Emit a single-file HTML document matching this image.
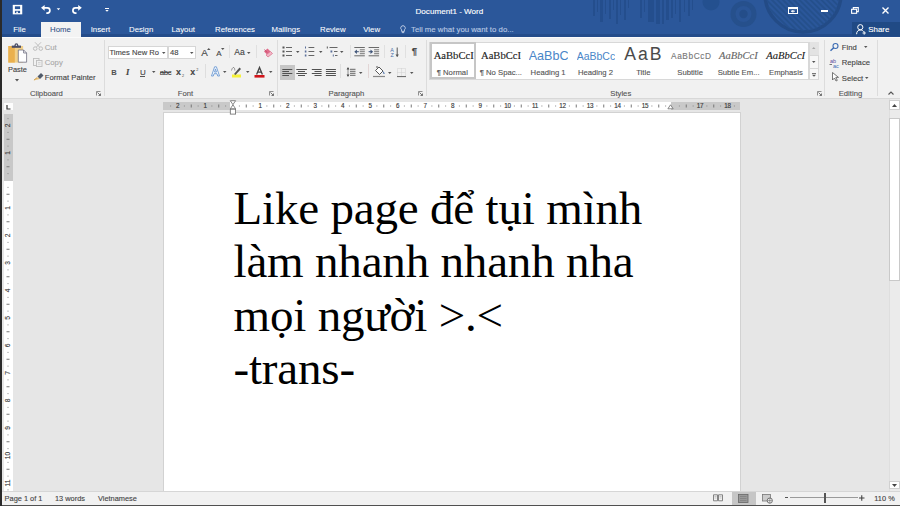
<!DOCTYPE html><html><head><meta charset="utf-8"><style>
*{margin:0;padding:0;box-sizing:border-box}
html,body{width:900px;height:506px;overflow:hidden;background:#e6e6e6;font-family:"Liberation Sans",sans-serif}
.a{position:absolute}
.t{position:absolute;white-space:nowrap;line-height:1;-webkit-text-stroke:0.12px currentColor}
.doc{-webkit-text-stroke:0}
svg{position:absolute;overflow:visible}
</style></head><body>
<div class="a" style="left:0px;top:0px;width:900px;height:37px;background:#2b579a;"></div>
<svg style="left:0px;top:0px;" width="900" height="37" viewBox="0 0 900 37"><rect x="593" y="0" width="2" height="16" fill="#234c89" opacity="0.8"/><rect x="597" y="0" width="1" height="12" fill="#234c89" opacity="0.8"/><rect x="600" y="0" width="3" height="22" fill="#234c89" opacity="0.8"/><rect x="605" y="0" width="1" height="14" fill="#234c89" opacity="0.8"/><rect x="609" y="0" width="2" height="19" fill="#234c89" opacity="0.8"/><rect x="613" y="0" width="1" height="10" fill="#234c89" opacity="0.8"/><rect x="616" y="0" width="2" height="24" fill="#234c89" opacity="0.8"/><rect x="620" y="0" width="1" height="15" fill="#234c89" opacity="0.8"/><rect x="624" y="0" width="2" height="20" fill="#234c89" opacity="0.8"/><rect x="628" y="0" width="1" height="8" fill="#234c89" opacity="0.8"/><rect x="640" y="0" width="2" height="18" fill="#234c89" opacity="0.8"/><rect x="644" y="0" width="1" height="12" fill="#234c89" opacity="0.8"/><rect x="648" y="0" width="6" height="22" fill="#234c89" opacity="0.8"/><rect x="656" y="0" width="4" height="24" fill="#234c89" opacity="0.8"/><rect x="662" y="0" width="2" height="24" fill="#234c89" opacity="0.8"/><rect x="666" y="0" width="3" height="20" fill="#234c89" opacity="0.8"/><rect x="671" y="0" width="2" height="18" fill="#234c89" opacity="0.8"/><rect x="675" y="0" width="1" height="14" fill="#234c89" opacity="0.8"/><rect x="679" y="0" width="2" height="22" fill="#234c89" opacity="0.8"/><rect x="684" y="0" width="1" height="12" fill="#234c89" opacity="0.8"/><rect x="688" y="0" width="2" height="16" fill="#234c89" opacity="0.8"/><rect x="692" y="0" width="1" height="10" fill="#234c89" opacity="0.8"/><circle cx="711" cy="2" r="8.5" fill="#24508f"/><circle cx="743.5" cy="14" r="13" fill="#26508c"/><circle cx="743.5" cy="14" r="8" fill="#2a5596"/><circle cx="743.5" cy="14" r="4.2" fill="#244d89"/><defs><clipPath id="bc"><circle cx="803" cy="-6" r="37"/></clipPath></defs><circle cx="803" cy="-6" r="38" fill="none" stroke="#234b86" stroke-width="3.5"/><g clip-path="url(#bc)"><line x1="694.0" y1="-45" x2="784.0" y2="45" stroke="#25508c" stroke-width="1.8"/><line x1="699.5" y1="-45" x2="789.5" y2="45" stroke="#25508c" stroke-width="1.8"/><line x1="705.0" y1="-45" x2="795.0" y2="45" stroke="#25508c" stroke-width="1.8"/><line x1="710.5" y1="-45" x2="800.5" y2="45" stroke="#25508c" stroke-width="1.8"/><line x1="716.0" y1="-45" x2="806.0" y2="45" stroke="#25508c" stroke-width="1.8"/><line x1="721.5" y1="-45" x2="811.5" y2="45" stroke="#25508c" stroke-width="1.8"/><line x1="727.0" y1="-45" x2="817.0" y2="45" stroke="#25508c" stroke-width="1.8"/><line x1="732.5" y1="-45" x2="822.5" y2="45" stroke="#25508c" stroke-width="1.8"/><line x1="738.0" y1="-45" x2="828.0" y2="45" stroke="#25508c" stroke-width="1.8"/><line x1="743.5" y1="-45" x2="833.5" y2="45" stroke="#25508c" stroke-width="1.8"/><line x1="749.0" y1="-45" x2="839.0" y2="45" stroke="#25508c" stroke-width="1.8"/><line x1="754.5" y1="-45" x2="844.5" y2="45" stroke="#25508c" stroke-width="1.8"/><line x1="760.0" y1="-45" x2="850.0" y2="45" stroke="#25508c" stroke-width="1.8"/><line x1="765.5" y1="-45" x2="855.5" y2="45" stroke="#25508c" stroke-width="1.8"/><line x1="771.0" y1="-45" x2="861.0" y2="45" stroke="#25508c" stroke-width="1.8"/><line x1="776.5" y1="-45" x2="866.5" y2="45" stroke="#25508c" stroke-width="1.8"/><line x1="782.0" y1="-45" x2="872.0" y2="45" stroke="#25508c" stroke-width="1.8"/><line x1="787.5" y1="-45" x2="877.5" y2="45" stroke="#25508c" stroke-width="1.8"/><line x1="793.0" y1="-45" x2="883.0" y2="45" stroke="#25508c" stroke-width="1.8"/><line x1="798.5" y1="-45" x2="888.5" y2="45" stroke="#25508c" stroke-width="1.8"/><line x1="804.0" y1="-45" x2="894.0" y2="45" stroke="#25508c" stroke-width="1.8"/><line x1="809.5" y1="-45" x2="899.5" y2="45" stroke="#25508c" stroke-width="1.8"/><line x1="815.0" y1="-45" x2="905.0" y2="45" stroke="#25508c" stroke-width="1.8"/><line x1="820.5" y1="-45" x2="910.5" y2="45" stroke="#25508c" stroke-width="1.8"/><line x1="826.0" y1="-45" x2="916.0" y2="45" stroke="#25508c" stroke-width="1.8"/><line x1="831.5" y1="-45" x2="921.5" y2="45" stroke="#25508c" stroke-width="1.8"/></g></svg>
<div class="a" style="left:0px;top:33.8px;width:900px;height:3.2px;background:#244c8a;"></div>
<svg style="left:0px;top:0px;" width="1" height="1" viewBox="0 0 1 1"><rect x="12.75" y="4.85" width="9.5" height="9.5" fill="#fff"/><rect x="14.9" y="6.3" width="5.2" height="2.8" fill="#2b579a"/><rect x="14.9" y="10.8" width="5.2" height="2.3" fill="#2b579a"/><rect x="16.3" y="11.6" width="1.6" height="1.5" fill="#fff"/></svg>
<svg style="left:0px;top:0px;" width="1" height="1" viewBox="0 0 1 1"><path d="M41 7.8L44.6 4.9v5.8z" fill="#fff"/><path d="M44 7.9h3.3a2.6 2.6 0 0 1 0 5.2h-1" fill="none" stroke="#fff" stroke-width="1.7"/></svg>
<svg style="left:0px;top:0px;" width="1" height="1" viewBox="0 0 1 1"><path d="M56.7 8.3h3.5L58.45 10.3z" fill="#fff"/></svg>
<svg style="left:0px;top:0px;" width="1" height="1" viewBox="0 0 1 1"><path d="M81.8 7.8L78.2 4.9v5.8z" fill="#fff"/><path d="M78.8 7.9h-3.3a2.6 2.6 0 0 0 0 5.2h1" fill="none" stroke="#fff" stroke-width="1.7"/></svg>
<svg style="left:0px;top:0px;" width="1" height="1" viewBox="0 0 1 1"><rect x="105" y="8" width="4" height="1" fill="#fff"/><path d="M105.3 9.9h3.4L107 11.7z" fill="#fff"/></svg>
<svg style="left:788px;top:7px;" width="10" height="7" viewBox="0 0 10 7"><rect x="0.5" y="0.5" width="9" height="6" fill="none" stroke="#fff" stroke-width="1"/><rect x="0.5" y="0.5" width="9" height="1.6" fill="#fff"/><path d="M3 4.2h4M5 3v2.5" stroke="#fff" stroke-width="0.9"/><path d="M3.2 4.3L4.6 3v2.6z" fill="#fff"/></svg>
<div class="a" style="left:820.5px;top:10.3px;width:7px;height:1.3px;background:#fff;"></div>
<svg style="left:851px;top:7px;" width="8" height="7" viewBox="0 0 8 7"><rect x="0.6" y="2.3" width="5" height="4" fill="none" stroke="#fff" stroke-width="1.1"/><path d="M2.3 2.3V0.6h5v4H5.6" fill="none" stroke="#fff" stroke-width="1.1"/></svg>
<svg style="left:881.5px;top:7px;" width="7" height="7" viewBox="0 0 7 7"><path d="M0.5 0.5l6 6M6.5 0.5l-6 6" stroke="#fff" stroke-width="1.4"/></svg>
<div class="a" style="left:851.5px;top:21.5px;width:48.5px;height:14px;background:#204a85;"></div>
<svg style="left:856px;top:23.5px;" width="10" height="11" viewBox="0 0 10 11"><circle cx="4.3" cy="3.2" r="2.6" fill="none" stroke="#fff" stroke-width="1"/><path d="M0.6 10.2c0-2.8 1.6-4.2 3.7-4.2s2.8 0.8 3.2 1.6" fill="none" stroke="#fff" stroke-width="1"/><path d="M6.5 9h3.4M8.2 7.3v3.4" stroke="#fff" stroke-width="0.9"/></svg>
<div class="a" style="left:41px;top:21.6px;width:40px;height:15.8px;background:#f3f3f3;"></div>
<svg style="left:400px;top:25px;" width="6" height="9" viewBox="0 0 6 9"><path d="M3 0.7a2.3 2.3 0 0 0-1.4 4.1v1.6h2.8V4.8A2.3 2.3 0 0 0 3 0.7z" fill="none" stroke="#c9d5ea" stroke-width="0.9"/><path d="M1.8 7.6h2.4" stroke="#c9d5ea" stroke-width="0.9"/></svg>
<div class="a" style="left:0px;top:37px;width:900px;height:61px;background:#f1f1f1;"></div>
<div class="a" style="left:0px;top:98px;width:900px;height:1px;background:#d8d8d8;"></div>
<div class="a" style="left:0px;top:37px;width:900px;height:1.3px;background:#fbfbfb;"></div>
<div class="a" style="left:103.5px;top:40px;width:1px;height:56px;background:#dcdcdc;"></div>
<div class="a" style="left:276.5px;top:40px;width:1px;height:56px;background:#dcdcdc;"></div>
<div class="a" style="left:426px;top:40px;width:1px;height:56px;background:#dcdcdc;"></div>
<div class="a" style="left:824.3px;top:40px;width:1px;height:56px;background:#dcdcdc;"></div>
<div class="a" style="left:876.6px;top:40px;width:1px;height:56px;background:#dcdcdc;"></div>
<svg style="left:96px;top:90.5px;" width="5" height="5" viewBox="0 0 5 5"><path d="M0.5 4.5V0.5h4" fill="none" stroke="#777" stroke-width="0.8"/><path d="M1.5 1.5L4.5 4.5M4.5 2.5v2h-2" fill="none" stroke="#666" stroke-width="0.9"/></svg>
<svg style="left:269.2px;top:90.5px;" width="5" height="5" viewBox="0 0 5 5"><path d="M0.5 4.5V0.5h4" fill="none" stroke="#777" stroke-width="0.8"/><path d="M1.5 1.5L4.5 4.5M4.5 2.5v2h-2" fill="none" stroke="#666" stroke-width="0.9"/></svg>
<svg style="left:418px;top:90.5px;" width="5" height="5" viewBox="0 0 5 5"><path d="M0.5 4.5V0.5h4" fill="none" stroke="#777" stroke-width="0.8"/><path d="M1.5 1.5L4.5 4.5M4.5 2.5v2h-2" fill="none" stroke="#666" stroke-width="0.9"/></svg>
<svg style="left:817px;top:90.5px;" width="5" height="5" viewBox="0 0 5 5"><path d="M0.5 4.5V0.5h4" fill="none" stroke="#777" stroke-width="0.8"/><path d="M1.5 1.5L4.5 4.5M4.5 2.5v2h-2" fill="none" stroke="#666" stroke-width="0.9"/></svg>
<svg style="left:888px;top:91px;" width="6" height="4" viewBox="0 0 6 4"><path d="M0.5 3.5L3 1l2.5 2.5" fill="none" stroke="#555" stroke-width="1.1"/></svg>
<svg style="left:0px;top:0px;" width="1" height="1" viewBox="0 0 1 1"><rect x="8.3" y="46" width="14.8" height="16.6" fill="#f1d08a"/><rect x="8.3" y="46" width="6.5" height="16.6" fill="#eab04e"/><rect x="11.8" y="45.6" width="9.2" height="2.2" fill="#4a4d66"/><circle cx="16.4" cy="45.2" r="1.9" fill="#4a4d66"/><circle cx="16.4" cy="45.2" r="0.7" fill="#e8e8e8"/><path d="M18.3 50h5.3l3 3v9.2h-8.3z" fill="#fff" stroke="#6e6e80" stroke-width="0.8"/><path d="M23.6 50v3h3" fill="none" stroke="#6e6e80" stroke-width="0.8"/></svg>
<svg style="left:14.5px;top:79px;" width="4" height="2.5" viewBox="0 0 4 2.5"><path d="M0 0h4L2 2.5z" fill="#555"/></svg>
<svg style="left:33px;top:42px;" width="10" height="9" viewBox="0 0 10 9"><circle cx="2.2" cy="6.6" r="1.8" fill="none" stroke="#b9b9b9" stroke-width="0.9"/><circle cx="7.8" cy="6.6" r="1.8" fill="none" stroke="#b9b9b9" stroke-width="0.9"/><path d="M3.3 5.2L8 0.3M6.7 5.2L2 0.3" stroke="#b9b9b9" stroke-width="0.9"/></svg>
<svg style="left:33px;top:57.5px;" width="10" height="9" viewBox="0 0 10 9"><rect x="0.5" y="0.5" width="5.5" height="7" fill="none" stroke="#bdbdbd" stroke-width="0.9"/><rect x="3.5" y="2.5" width="5.5" height="6" fill="#f0f0f0" stroke="#bdbdbd" stroke-width="0.9"/><path d="M5 4.5h2.5M5 6.2h2.5" stroke="#c8c8c8" stroke-width="0.7"/></svg>
<svg style="left:32.5px;top:72.5px;" width="11" height="8" viewBox="0 0 11 8"><path d="M0.5 7.5L5 4l2 2z" fill="#e9c27a"/><path d="M4.5 3.5l2.5 2.5 3.5-3.5-2.5-2.5z" fill="#505a6a"/><path d="M1 7l3-2.3" stroke="#d0a050" stroke-width="1"/></svg>
<div class="a" style="left:107.5px;top:45.7px;width:60.7px;height:13.7px;background:#fff;border:1px solid #d6d6d6"></div>
<div class="a" style="left:168.2px;top:45.7px;width:27.7px;height:13.7px;background:#fff;border:1px solid #d6d6d6"></div>
<svg style="left:162.3px;top:51.5px;" width="3.5" height="2" viewBox="0 0 3.5 2"><path d="M0 0h3.5L1.75 2z" fill="#555"/></svg>
<svg style="left:190.2px;top:51.5px;" width="3.5" height="2" viewBox="0 0 3.5 2"><path d="M0 0h3.5L1.75 2z" fill="#555"/></svg>
<svg style="left:206.5px;top:47.5px;" width="3.5" height="2" viewBox="0 0 3.5 2"><path d="M0 2h3.5L1.75 0z" fill="#555"/></svg>
<svg style="left:220.5px;top:47.5px;" width="3.5" height="2" viewBox="0 0 3.5 2"><path d="M0 0h3.5L1.75 2z" fill="#555"/></svg>
<svg style="left:247px;top:51.5px;" width="3.5" height="2" viewBox="0 0 3.5 2"><path d="M0 0h3.5L1.75 2z" fill="#555"/></svg>
<div class="a" style="left:228.5px;top:45px;width:1px;height:13px;background:#e0e0e0;"></div>
<div class="a" style="left:255.5px;top:45px;width:1px;height:13px;background:#e0e0e0;"></div>
<svg style="left:262.5px;top:47.5px;" width="10" height="10" viewBox="0 0 10 10"><path d="M1 3.5l3.5-3 3 3-3.5 3z" fill="#e06a8a"/><path d="M3 7l4.5-3.5 2 2L5 9z" fill="#f2b6c6" stroke="#d86b88" stroke-width="0.7"/><path d="M1.5 1.5L4 4.5" stroke="#c04060" stroke-width="0.8"/></svg>
<div class="a" style="left:139.8px;top:75.8px;width:5.5px;height:0.9px;background:#555;"></div>
<svg style="left:152.2px;top:71px;" width="3.5" height="2" viewBox="0 0 3.5 2"><path d="M0 0h3.5L1.75 2z" fill="#555"/></svg>
<div class="a" style="left:159.5px;top:72px;width:11px;height:0.8px;background:#666;"></div>
<div class="a" style="left:205px;top:64px;width:1px;height:14px;background:#dedede;"></div>
<svg style="left:210.5px;top:66px;" width="9" height="10.5" viewBox="0 0 9 10.5"><path d="M0.5 10L3.6 0.8h1.8L8.5 10H6.7L6 7.7H3L2.3 10zM3.5 6.1h2L4.5 2.9z" fill="#fff" fill-rule="evenodd" stroke="#6a98d4" stroke-width="0.9"/></svg>
<svg style="left:223px;top:71px;" width="3.5" height="2" viewBox="0 0 3.5 2"><path d="M0 0h3.5L1.75 2z" fill="#555"/></svg>
<svg style="left:231px;top:66px;" width="11" height="12" viewBox="0 0 11 12"><rect x="1" y="8.5" width="9" height="3" fill="#f6f23a"/><path d="M3 8L8.5 1.5 10 3 4.5 9z" fill="#555"/><path d="M0.5 4.5c0.5-2 1.2-3 2-3s1.3 1 1.3 3" fill="none" stroke="#555" stroke-width="0.6"/></svg>
<svg style="left:246px;top:71px;" width="3.5" height="2" viewBox="0 0 3.5 2"><path d="M0 0h3.5L1.75 2z" fill="#555"/></svg>
<svg style="left:253.5px;top:66px;" width="11" height="12" viewBox="0 0 11 12"><path d="M2.6 8.6L5.5 1.5 8.4 8.6M3.7 6.2h3.6" fill="none" stroke="#444" stroke-width="1.3"/><rect x="0.5" y="9" width="10" height="2.6" fill="#d0141a"/></svg>
<svg style="left:268.5px;top:71px;" width="3.5" height="2" viewBox="0 0 3.5 2"><path d="M0 0h3.5L1.75 2z" fill="#555"/></svg>
<svg style="left:0px;top:0px;" width="1" height="1" viewBox="0 0 1 1"><rect x="282.5" y="46.5" width="2" height="2" fill="#555"/><rect x="286" y="47" width="6" height="1" fill="#666"/><rect x="308.5" y="47" width="5.8" height="1" fill="#666"/><rect x="282.5" y="50.5" width="2" height="2" fill="#555"/><rect x="286" y="51" width="6" height="1" fill="#666"/><rect x="308.5" y="51" width="5.8" height="1" fill="#666"/><rect x="282.5" y="54.5" width="2" height="2" fill="#555"/><rect x="286" y="55" width="6" height="1" fill="#666"/><rect x="308.5" y="55" width="5.8" height="1" fill="#666"/><rect x="305" y="46.5" width="1" height="2" fill="#5a6f9a"/><rect x="304.8" y="50.5" width="1.6" height="2" fill="#5a6f9a"/><rect x="304.8" y="54.5" width="1.6" height="2" fill="#5a6f9a"/><rect x="326.8" y="46.5" width="1" height="2" fill="#555"/><rect x="329.5" y="47" width="8" height="1" fill="#666"/><rect x="330.5" y="50.5" width="1.8" height="2" fill="#5a6f9a"/><rect x="334" y="51" width="3.5" height="1" fill="#666"/><rect x="332.8" y="54.5" width="1" height="2" fill="#5a6f9a"/><rect x="335" y="55" width="2.5" height="1" fill="#666"/></svg>
<svg style="left:296.2px;top:51px;" width="3.5" height="2" viewBox="0 0 3.5 2"><path d="M0 0h3.5L1.75 2z" fill="#555"/></svg>
<svg style="left:319.3px;top:51px;" width="3.5" height="2" viewBox="0 0 3.5 2"><path d="M0 0h3.5L1.75 2z" fill="#555"/></svg>
<svg style="left:340px;top:51px;" width="3.5" height="2" viewBox="0 0 3.5 2"><path d="M0 0h3.5L1.75 2z" fill="#555"/></svg>
<div class="a" style="left:349.6px;top:45px;width:1px;height:13px;background:#e0e0e0;"></div>
<svg style="left:0px;top:0px;" width="1" height="1" viewBox="0 0 1 1"><rect x="354.3" y="47" width="10.5" height="1" fill="#6a6a6a"/><rect x="359.8" y="49.3" width="5" height="1" fill="#777"/><rect x="359.8" y="51.2" width="5" height="1" fill="#777"/><rect x="359.8" y="53.2" width="5" height="1" fill="#777"/><rect x="354.3" y="55.3" width="10.5" height="1" fill="#6a6a6a"/><path d="M354.3 51.7l2.6-2.3v4.6z" fill="#3d5377"/><rect x="356.3" y="51.2" width="2.5" height="1" fill="#3d5377"/><rect x="368.6" y="47" width="10.5" height="1" fill="#6a6a6a"/><rect x="374.1" y="49.3" width="5" height="1" fill="#777"/><rect x="374.1" y="51.2" width="5" height="1" fill="#777"/><rect x="374.1" y="53.2" width="5" height="1" fill="#777"/><rect x="368.6" y="55.3" width="10.5" height="1" fill="#6a6a6a"/><path d="M373.1 51.7l-2.6-2.3v4.6z" fill="#3d5377"/><rect x="368.6" y="51.2" width="2.5" height="1" fill="#3d5377"/></svg>
<div class="a" style="left:384.2px;top:45px;width:1px;height:13px;background:#e0e0e0;"></div>
<svg style="left:390.4px;top:46.5px;" width="10" height="11" viewBox="0 0 10 11"><text x="0.3" y="4.8" style="font-size:5.4px;fill:#4a6ea8;font-family:Liberation Sans">A</text><text x="0.5" y="10.2" style="font-size:5.4px;fill:#4a6ea8;font-family:Liberation Sans">Z</text><path d="M7.2 0.5v9" stroke="#555" stroke-width="1"/><path d="M5.5 7.5l1.7 2.5 1.7-2.5z" fill="#555"/></svg>
<div class="a" style="left:405.4px;top:45px;width:1px;height:13px;background:#e0e0e0;"></div>
<div class="a" style="left:280px;top:65px;width:14.5px;height:15px;background:#c6c6c6;"></div>
<svg style="left:0px;top:0px;" width="1" height="1" viewBox="0 0 1 1"><rect x="282.3" y="69" width="10.0" height="1" fill="#505050"/><rect x="282.3" y="71" width="6.699999999999989" height="1" fill="#505050"/><rect x="282.3" y="73" width="10.0" height="1" fill="#505050"/><rect x="282.3" y="75" width="6.699999999999989" height="1" fill="#505050"/></svg>
<svg style="left:0px;top:0px;" width="1" height="1" viewBox="0 0 1 1"><rect x="296.3" y="69" width="10.599999999999966" height="1" fill="#505050"/><rect x="298" y="71" width="7" height="1" fill="#505050"/><rect x="296.3" y="73" width="10.599999999999966" height="1" fill="#505050"/><rect x="298" y="75" width="7" height="1" fill="#505050"/></svg>
<svg style="left:0px;top:0px;" width="1" height="1" viewBox="0 0 1 1"><rect x="311.8" y="69" width="9.800000000000011" height="1" fill="#505050"/><rect x="314.5" y="71" width="7.100000000000023" height="1" fill="#505050"/><rect x="311.8" y="73" width="9.800000000000011" height="1" fill="#505050"/><rect x="314.5" y="75" width="7.100000000000023" height="1" fill="#505050"/></svg>
<svg style="left:0px;top:0px;" width="1" height="1" viewBox="0 0 1 1"><rect x="325.9" y="69" width="10.0" height="1" fill="#505050"/><rect x="325.9" y="71" width="10.0" height="1" fill="#505050"/><rect x="325.9" y="73" width="10.0" height="1" fill="#505050"/><rect x="325.9" y="75" width="10.0" height="1" fill="#505050"/></svg>
<div class="a" style="left:340.3px;top:64px;width:1px;height:14px;background:#dedede;"></div>
<svg style="left:0px;top:0px;" width="1" height="1" viewBox="0 0 1 1"><rect x="350" y="68.8" width="5.5" height="1" fill="#666"/><rect x="350" y="70.8" width="5.5" height="1" fill="#666"/><rect x="350" y="72.8" width="5.5" height="1" fill="#666"/><rect x="350" y="74.8" width="5.5" height="1" fill="#666"/><path d="M348 68.2v7.6" stroke="#777" stroke-width="0.8"/><path d="M346.6 69.4l1.4-2.3 1.4 2.3zM346.6 74.6l1.4 2.3 1.4-2.3z" fill="#444"/></svg>
<svg style="left:359px;top:72px;" width="3.5" height="2" viewBox="0 0 3.5 2"><path d="M0 0h3.5L1.75 2z" fill="#555"/></svg>
<div class="a" style="left:368px;top:64px;width:1px;height:14px;background:#e2d6d6;"></div>
<svg style="left:373px;top:66.3px;" width="12" height="11.5" viewBox="0 0 12 11.5"><path d="M2.5 4.5L6 1l4 4-3.5 3.5z" fill="#fff" stroke="#444" stroke-width="0.9"/><path d="M10 5.5c0.8 1 1.2 1.8 1 2.5" stroke="#3c6cb4" stroke-width="1"/><path d="M4 2V0" stroke="#444" stroke-width="0.9"/><path d="M0 10.5h12" stroke="#888" stroke-width="1.2"/></svg>
<svg style="left:388px;top:72px;" width="3.5" height="2" viewBox="0 0 3.5 2"><path d="M0 0h3.5L1.75 2z" fill="#555"/></svg>
<svg style="left:396.7px;top:67.5px;" width="9" height="9" viewBox="0 0 9 9"><rect x="0.5" y="0.5" width="8" height="8" fill="none" stroke="#c9c9c9" stroke-width="0.8" stroke-dasharray="1 1"/><path d="M4.5 0.5v8M0.5 4.5h8" stroke="#c9c9c9" stroke-width="0.8" stroke-dasharray="1 1"/><path d="M0 8.6h9" stroke="#555" stroke-width="0.9"/></svg>
<svg style="left:410px;top:72px;" width="3.5" height="2" viewBox="0 0 3.5 2"><path d="M0 0h3.5L1.75 2z" fill="#555"/></svg>
<div class="a" style="left:429.3px;top:41.7px;width:380px;height:38.3px;background:#fff;border:1px solid #d8d8d8"></div>
<div class="a" style="left:430px;top:42.3px;width:46px;height:37px;background:transparent;border:2px solid #c6c6c6"></div>
<div class="a" style="left:528.7px;top:47px;width:39px;height:16px;overflow:hidden"><div class="t" style="left:0;top:2.59px;font-size:12.6px;color:#4a86c8;-webkit-text-stroke:0">AaBbCc</div></div>
<div class="a" style="left:576.7px;top:47px;width:38px;height:16px;overflow:hidden"><div class="t" style="left:0;top:3.68px;font-size:10.5px;color:#4a86c8;-webkit-text-stroke:0">AaBbCcD</div></div>
<div class="a" style="left:809px;top:41.7px;width:10px;height:38.3px;background:#f7f7f7;border:1px solid #d8d8d8"></div>
<div class="a" style="left:809.5px;top:42.2px;width:9px;height:12.5px;background:#e3e3e3;"></div>
<svg style="left:812.2px;top:47.2px;" width="3.5" height="2" viewBox="0 0 3.5 2"><path d="M0 2h3.5L1.75 0z" fill="#aaa"/></svg>
<div class="a" style="left:809px;top:55px;width:10px;height:1px;background:#d8d8d8;"></div>
<svg style="left:812.2px;top:61px;" width="3.5" height="2" viewBox="0 0 3.5 2"><path d="M0 0h3.5L1.75 2z" fill="#555"/></svg>
<div class="a" style="left:809px;top:68px;width:10px;height:1px;background:#d8d8d8;"></div>
<svg style="left:812px;top:72.5px;" width="4" height="4" viewBox="0 0 4 4"><path d="M0 0.5h4" stroke="#555" stroke-width="0.8"/><path d="M0 1.8h4L2 3.8z" fill="#555"/></svg>
<svg style="left:830px;top:43.2px;" width="9" height="8" viewBox="0 0 9 8"><circle cx="5.5" cy="3" r="2.5" fill="none" stroke="#3c6cb4" stroke-width="1.1"/><path d="M3.7 4.8L0.5 7.8" stroke="#3c6cb4" stroke-width="1.5"/></svg>
<svg style="left:863.8px;top:46px;" width="3.5" height="2" viewBox="0 0 3.5 2"><path d="M0 0h3.5L1.75 2z" fill="#555"/></svg>
<svg style="left:829.3px;top:57.5px;" width="11" height="10" viewBox="0 0 11 10"><text x="1" y="4.5" font-size="5.5" fill="#5b4c9a" font-family="Liberation Sans">ab</text><text x="4" y="9.8" font-size="5.5" fill="#3c6cb4" font-family="Liberation Sans">ac</text><path d="M0.5 6.5h2.5" stroke="#555" stroke-width="0.8"/></svg>
<svg style="left:831.8px;top:71.9px;" width="7" height="9" viewBox="0 0 7 9"><path d="M0.5 0.5v7.5l2-2 1.5 3 1.3-0.6-1.5-3h2.7z" fill="#fff" stroke="#555" stroke-width="0.8"/></svg>
<svg style="left:864.5px;top:77px;" width="3.5" height="2" viewBox="0 0 3.5 2"><path d="M0 0h3.5L1.75 2z" fill="#555"/></svg>
<div class="a" style="left:0px;top:99px;width:900px;height:392px;background:#e6e6e6;"></div>
<div class="a" style="left:164px;top:113px;width:576px;height:378px;background:#fff;box-shadow:0 0 0 1px #d2d2d2"></div>
<div class="t doc" style="left:233.5px;top:182px;font-family:'Liberation Serif',serif;font-size:47px;line-height:53.4px;letter-spacing:-0.18px;color:#000">Like page để tụi mình<br>làm nhanh nhanh nha<br>mọi người &gt;.&lt;<br>-trans-</div>
<div class="a" style="left:162.5px;top:102px;width:577px;height:8px;background:#fff;"></div>
<div class="a" style="left:162.5px;top:102px;width:67.5px;height:8px;background:#c9c9c9;"></div>
<div class="a" style="left:670.5px;top:102px;width:69px;height:8px;background:#c9c9c9;"></div>
<svg style="left:0px;top:0px;" width="1" height="1" viewBox="0 0 1 1"><rect x="170.12" y="105.5" width="1" height="1" fill="#888"/><text x="177.50" y="108.4" font-size="6.3" letter-spacing="-0.3" fill="#3a3a3a" stroke="#3a3a3a" stroke-width="0.15" text-anchor="middle" font-family="Liberation Sans">2</text><rect x="183.88" y="105.5" width="1" height="1" fill="#888"/><rect x="190.75" y="104.5" width="1" height="3" fill="#777"/><rect x="197.62" y="105.5" width="1" height="1" fill="#888"/><text x="205.00" y="108.4" font-size="6.3" letter-spacing="-0.3" fill="#3a3a3a" stroke="#3a3a3a" stroke-width="0.15" text-anchor="middle" font-family="Liberation Sans">1</text><rect x="211.38" y="105.5" width="1" height="1" fill="#888"/><rect x="218.25" y="104.5" width="1" height="3" fill="#777"/><rect x="225.12" y="105.5" width="1" height="1" fill="#888"/><rect x="238.88" y="105.5" width="1" height="1" fill="#888"/><rect x="245.75" y="104.5" width="1" height="3" fill="#777"/><rect x="252.62" y="105.5" width="1" height="1" fill="#888"/><text x="260.00" y="108.4" font-size="6.3" letter-spacing="-0.3" fill="#3a3a3a" stroke="#3a3a3a" stroke-width="0.15" text-anchor="middle" font-family="Liberation Sans">1</text><rect x="266.38" y="105.5" width="1" height="1" fill="#888"/><rect x="273.25" y="104.5" width="1" height="3" fill="#777"/><rect x="280.12" y="105.5" width="1" height="1" fill="#888"/><text x="287.50" y="108.4" font-size="6.3" letter-spacing="-0.3" fill="#3a3a3a" stroke="#3a3a3a" stroke-width="0.15" text-anchor="middle" font-family="Liberation Sans">2</text><rect x="293.88" y="105.5" width="1" height="1" fill="#888"/><rect x="300.75" y="104.5" width="1" height="3" fill="#777"/><rect x="307.62" y="105.5" width="1" height="1" fill="#888"/><text x="315.00" y="108.4" font-size="6.3" letter-spacing="-0.3" fill="#3a3a3a" stroke="#3a3a3a" stroke-width="0.15" text-anchor="middle" font-family="Liberation Sans">3</text><rect x="321.38" y="105.5" width="1" height="1" fill="#888"/><rect x="328.25" y="104.5" width="1" height="3" fill="#777"/><rect x="335.12" y="105.5" width="1" height="1" fill="#888"/><text x="342.50" y="108.4" font-size="6.3" letter-spacing="-0.3" fill="#3a3a3a" stroke="#3a3a3a" stroke-width="0.15" text-anchor="middle" font-family="Liberation Sans">4</text><rect x="348.88" y="105.5" width="1" height="1" fill="#888"/><rect x="355.75" y="104.5" width="1" height="3" fill="#777"/><rect x="362.62" y="105.5" width="1" height="1" fill="#888"/><text x="370.00" y="108.4" font-size="6.3" letter-spacing="-0.3" fill="#3a3a3a" stroke="#3a3a3a" stroke-width="0.15" text-anchor="middle" font-family="Liberation Sans">5</text><rect x="376.38" y="105.5" width="1" height="1" fill="#888"/><rect x="383.25" y="104.5" width="1" height="3" fill="#777"/><rect x="390.12" y="105.5" width="1" height="1" fill="#888"/><text x="397.50" y="108.4" font-size="6.3" letter-spacing="-0.3" fill="#3a3a3a" stroke="#3a3a3a" stroke-width="0.15" text-anchor="middle" font-family="Liberation Sans">6</text><rect x="403.88" y="105.5" width="1" height="1" fill="#888"/><rect x="410.75" y="104.5" width="1" height="3" fill="#777"/><rect x="417.62" y="105.5" width="1" height="1" fill="#888"/><text x="425.00" y="108.4" font-size="6.3" letter-spacing="-0.3" fill="#3a3a3a" stroke="#3a3a3a" stroke-width="0.15" text-anchor="middle" font-family="Liberation Sans">7</text><rect x="431.38" y="105.5" width="1" height="1" fill="#888"/><rect x="438.25" y="104.5" width="1" height="3" fill="#777"/><rect x="445.12" y="105.5" width="1" height="1" fill="#888"/><text x="452.50" y="108.4" font-size="6.3" letter-spacing="-0.3" fill="#3a3a3a" stroke="#3a3a3a" stroke-width="0.15" text-anchor="middle" font-family="Liberation Sans">8</text><rect x="458.88" y="105.5" width="1" height="1" fill="#888"/><rect x="465.75" y="104.5" width="1" height="3" fill="#777"/><rect x="472.62" y="105.5" width="1" height="1" fill="#888"/><text x="480.00" y="108.4" font-size="6.3" letter-spacing="-0.3" fill="#3a3a3a" stroke="#3a3a3a" stroke-width="0.15" text-anchor="middle" font-family="Liberation Sans">9</text><rect x="486.38" y="105.5" width="1" height="1" fill="#888"/><rect x="493.25" y="104.5" width="1" height="3" fill="#777"/><rect x="500.12" y="105.5" width="1" height="1" fill="#888"/><text x="507.50" y="108.4" font-size="6.3" letter-spacing="-0.3" fill="#3a3a3a" stroke="#3a3a3a" stroke-width="0.15" text-anchor="middle" font-family="Liberation Sans">10</text><rect x="513.88" y="105.5" width="1" height="1" fill="#888"/><rect x="520.75" y="104.5" width="1" height="3" fill="#777"/><rect x="527.62" y="105.5" width="1" height="1" fill="#888"/><text x="535.00" y="108.4" font-size="6.3" letter-spacing="-0.3" fill="#3a3a3a" stroke="#3a3a3a" stroke-width="0.15" text-anchor="middle" font-family="Liberation Sans">11</text><rect x="541.38" y="105.5" width="1" height="1" fill="#888"/><rect x="548.25" y="104.5" width="1" height="3" fill="#777"/><rect x="555.12" y="105.5" width="1" height="1" fill="#888"/><text x="562.50" y="108.4" font-size="6.3" letter-spacing="-0.3" fill="#3a3a3a" stroke="#3a3a3a" stroke-width="0.15" text-anchor="middle" font-family="Liberation Sans">12</text><rect x="568.88" y="105.5" width="1" height="1" fill="#888"/><rect x="575.75" y="104.5" width="1" height="3" fill="#777"/><rect x="582.62" y="105.5" width="1" height="1" fill="#888"/><text x="590.00" y="108.4" font-size="6.3" letter-spacing="-0.3" fill="#3a3a3a" stroke="#3a3a3a" stroke-width="0.15" text-anchor="middle" font-family="Liberation Sans">13</text><rect x="596.38" y="105.5" width="1" height="1" fill="#888"/><rect x="603.25" y="104.5" width="1" height="3" fill="#777"/><rect x="610.12" y="105.5" width="1" height="1" fill="#888"/><text x="617.50" y="108.4" font-size="6.3" letter-spacing="-0.3" fill="#3a3a3a" stroke="#3a3a3a" stroke-width="0.15" text-anchor="middle" font-family="Liberation Sans">14</text><rect x="623.88" y="105.5" width="1" height="1" fill="#888"/><rect x="630.75" y="104.5" width="1" height="3" fill="#777"/><rect x="637.62" y="105.5" width="1" height="1" fill="#888"/><text x="645.00" y="108.4" font-size="6.3" letter-spacing="-0.3" fill="#3a3a3a" stroke="#3a3a3a" stroke-width="0.15" text-anchor="middle" font-family="Liberation Sans">15</text><rect x="651.38" y="105.5" width="1" height="1" fill="#888"/><rect x="658.25" y="104.5" width="1" height="3" fill="#777"/><rect x="665.12" y="105.5" width="1" height="1" fill="#888"/><rect x="678.88" y="105.5" width="1" height="1" fill="#888"/><rect x="685.75" y="104.5" width="1" height="3" fill="#777"/><rect x="692.62" y="105.5" width="1" height="1" fill="#888"/><text x="700.00" y="108.4" font-size="6.3" letter-spacing="-0.3" fill="#3a3a3a" stroke="#3a3a3a" stroke-width="0.15" text-anchor="middle" font-family="Liberation Sans">17</text><rect x="706.38" y="105.5" width="1" height="1" fill="#888"/><rect x="713.25" y="104.5" width="1" height="3" fill="#777"/><rect x="720.12" y="105.5" width="1" height="1" fill="#888"/><text x="727.50" y="108.4" font-size="6.3" letter-spacing="-0.3" fill="#3a3a3a" stroke="#3a3a3a" stroke-width="0.15" text-anchor="middle" font-family="Liberation Sans">18</text><rect x="733.88" y="105.5" width="1" height="1" fill="#888"/></svg>
<svg style="left:0px;top:0px;" width="1" height="1" viewBox="0 0 1 1"><path d="M230.3 100.7h5.3L232.95 104.6z" fill="#fff" stroke="#6a6a6a" stroke-width="0.8"/><path d="M230.3 108.8L232.95 104.8l2.65 4z" fill="#fff" stroke="#6a6a6a" stroke-width="0.8"/><rect x="230.3" y="109.2" width="5.3" height="4.9" fill="#fff" stroke="#6a6a6a" stroke-width="0.8"/></svg>
<svg style="left:0px;top:0px;" width="1" height="1" viewBox="0 0 1 1"><path d="M667.9 108.8L670.5 104.8l2.65 4z" fill="#fff" stroke="#6a6a6a" stroke-width="0.8"/></svg>
<div class="a" style="left:3.5px;top:102.5px;width:9.5px;height:7.5px;background:#fdfdfd;"></div>
<svg style="left:5.5px;top:104.5px;" width="5" height="5" viewBox="0 0 5 5"><path d="M1 0v4h3.5" fill="none" stroke="#333" stroke-width="1.2"/></svg>
<div class="a" style="left:3.5px;top:113.5px;width:9px;height:378px;background:#fff;"></div>
<div class="a" style="left:3.5px;top:113.5px;width:9px;height:67px;background:#c8c8c8;"></div>
<svg style="left:0px;top:0px;" width="1" height="1" viewBox="0 0 1 1"><rect x="7.5" y="118.12" width="1" height="1" fill="#888"/><text x="0" y="0" transform="translate(10.3 125.50) rotate(-90)" font-size="6.6" fill="#3a3a3a" stroke="#3a3a3a" stroke-width="0.15" text-anchor="middle" font-family="Liberation Sans">2</text><rect x="7.5" y="131.88" width="1" height="1" fill="#888"/><rect x="6.5" y="138.75" width="3" height="1" fill="#777"/><rect x="7.5" y="145.62" width="1" height="1" fill="#888"/><text x="0" y="0" transform="translate(10.3 153.00) rotate(-90)" font-size="6.6" fill="#3a3a3a" stroke="#3a3a3a" stroke-width="0.15" text-anchor="middle" font-family="Liberation Sans">1</text><rect x="7.5" y="159.38" width="1" height="1" fill="#888"/><rect x="6.5" y="166.25" width="3" height="1" fill="#777"/><rect x="7.5" y="173.12" width="1" height="1" fill="#888"/><rect x="7.5" y="186.88" width="1" height="1" fill="#888"/><rect x="6.5" y="193.75" width="3" height="1" fill="#777"/><rect x="7.5" y="200.62" width="1" height="1" fill="#888"/><text x="0" y="0" transform="translate(10.3 208.00) rotate(-90)" font-size="6.6" fill="#3a3a3a" stroke="#3a3a3a" stroke-width="0.15" text-anchor="middle" font-family="Liberation Sans">1</text><rect x="7.5" y="214.38" width="1" height="1" fill="#888"/><rect x="6.5" y="221.25" width="3" height="1" fill="#777"/><rect x="7.5" y="228.12" width="1" height="1" fill="#888"/><text x="0" y="0" transform="translate(10.3 235.50) rotate(-90)" font-size="6.6" fill="#3a3a3a" stroke="#3a3a3a" stroke-width="0.15" text-anchor="middle" font-family="Liberation Sans">2</text><rect x="7.5" y="241.88" width="1" height="1" fill="#888"/><rect x="6.5" y="248.75" width="3" height="1" fill="#777"/><rect x="7.5" y="255.62" width="1" height="1" fill="#888"/><text x="0" y="0" transform="translate(10.3 263.00) rotate(-90)" font-size="6.6" fill="#3a3a3a" stroke="#3a3a3a" stroke-width="0.15" text-anchor="middle" font-family="Liberation Sans">3</text><rect x="7.5" y="269.38" width="1" height="1" fill="#888"/><rect x="6.5" y="276.25" width="3" height="1" fill="#777"/><rect x="7.5" y="283.12" width="1" height="1" fill="#888"/><text x="0" y="0" transform="translate(10.3 290.50) rotate(-90)" font-size="6.6" fill="#3a3a3a" stroke="#3a3a3a" stroke-width="0.15" text-anchor="middle" font-family="Liberation Sans">4</text><rect x="7.5" y="296.88" width="1" height="1" fill="#888"/><rect x="6.5" y="303.75" width="3" height="1" fill="#777"/><rect x="7.5" y="310.62" width="1" height="1" fill="#888"/><text x="0" y="0" transform="translate(10.3 318.00) rotate(-90)" font-size="6.6" fill="#3a3a3a" stroke="#3a3a3a" stroke-width="0.15" text-anchor="middle" font-family="Liberation Sans">5</text><rect x="7.5" y="324.38" width="1" height="1" fill="#888"/><rect x="6.5" y="331.25" width="3" height="1" fill="#777"/><rect x="7.5" y="338.12" width="1" height="1" fill="#888"/><text x="0" y="0" transform="translate(10.3 345.50) rotate(-90)" font-size="6.6" fill="#3a3a3a" stroke="#3a3a3a" stroke-width="0.15" text-anchor="middle" font-family="Liberation Sans">6</text><rect x="7.5" y="351.88" width="1" height="1" fill="#888"/><rect x="6.5" y="358.75" width="3" height="1" fill="#777"/><rect x="7.5" y="365.62" width="1" height="1" fill="#888"/><text x="0" y="0" transform="translate(10.3 373.00) rotate(-90)" font-size="6.6" fill="#3a3a3a" stroke="#3a3a3a" stroke-width="0.15" text-anchor="middle" font-family="Liberation Sans">7</text><rect x="7.5" y="379.38" width="1" height="1" fill="#888"/><rect x="6.5" y="386.25" width="3" height="1" fill="#777"/><rect x="7.5" y="393.12" width="1" height="1" fill="#888"/><text x="0" y="0" transform="translate(10.3 400.50) rotate(-90)" font-size="6.6" fill="#3a3a3a" stroke="#3a3a3a" stroke-width="0.15" text-anchor="middle" font-family="Liberation Sans">8</text><rect x="7.5" y="406.88" width="1" height="1" fill="#888"/><rect x="6.5" y="413.75" width="3" height="1" fill="#777"/><rect x="7.5" y="420.62" width="1" height="1" fill="#888"/><text x="0" y="0" transform="translate(10.3 428.00) rotate(-90)" font-size="6.6" fill="#3a3a3a" stroke="#3a3a3a" stroke-width="0.15" text-anchor="middle" font-family="Liberation Sans">9</text><rect x="7.5" y="434.38" width="1" height="1" fill="#888"/><rect x="6.5" y="441.25" width="3" height="1" fill="#777"/><rect x="7.5" y="448.12" width="1" height="1" fill="#888"/><text x="0" y="0" transform="translate(10.3 455.50) rotate(-90)" font-size="6.6" fill="#3a3a3a" stroke="#3a3a3a" stroke-width="0.15" text-anchor="middle" font-family="Liberation Sans">10</text><rect x="7.5" y="461.88" width="1" height="1" fill="#888"/><rect x="6.5" y="468.75" width="3" height="1" fill="#777"/><rect x="7.5" y="475.62" width="1" height="1" fill="#888"/><text x="0" y="0" transform="translate(10.3 483.00) rotate(-90)" font-size="6.6" fill="#3a3a3a" stroke="#3a3a3a" stroke-width="0.15" text-anchor="middle" font-family="Liberation Sans">11</text><rect x="7.5" y="489.38" width="1" height="1" fill="#888"/></svg>
<div class="a" style="left:888.5px;top:99px;width:11.5px;height:392px;background:#ebebeb;border-left:1px solid #dedede"></div>
<div class="a" style="left:889px;top:100px;width:11px;height:9.5px;background:#fff;border:1px solid #d0d0d0"></div>
<svg style="left:892px;top:103.5px;" width="5" height="3" viewBox="0 0 5 3"><path d="M0 3h5L2.5 0z" fill="#444"/></svg>
<div class="a" style="left:889px;top:118px;width:11px;height:162.5px;background:#fff;border:1px solid #c9c9c9"></div>
<div class="a" style="left:889px;top:481px;width:11px;height:8px;background:#fff;border:1px solid #d0d0d0"></div>
<svg style="left:892px;top:484px;" width="5" height="3" viewBox="0 0 5 3"><path d="M0 0h5L2.5 3z" fill="#444"/></svg>
<div class="a" style="left:0px;top:491px;width:900px;height:14px;background:#f1f1f1;border-top:1px solid #d6d6d6"></div>
<div class="a" style="left:0px;top:504.5px;width:900px;height:1.5px;background:#505050;"></div>
<svg style="left:713.3px;top:494px;" width="10" height="7" viewBox="0 0 10 7"><path d="M0.5 0.8h4v6h-4zM5.5 0.8h4v6h-4z" fill="none" stroke="#777" stroke-width="0.9"/><path d="M1.5 2.5h2M1.5 4h2M6.5 2.5h2M6.5 4h2" stroke="#aaa" stroke-width="0.6"/></svg>
<div class="a" style="left:731.5px;top:491.5px;width:24px;height:13px;background:#c6c6c6;"></div>
<svg style="left:737.8px;top:493.5px;" width="10.5" height="9" viewBox="0 0 10.5 9"><rect x="0.5" y="0.5" width="9.5" height="8" fill="#999" stroke="#666" stroke-width="0.8"/><path d="M2 2.5h6.5M2 4.5h6.5M2 6.5h6.5" stroke="#777" stroke-width="0.6"/></svg>
<svg style="left:762.3px;top:493.5px;" width="11" height="9" viewBox="0 0 11 9"><rect x="0.5" y="0.5" width="8" height="6.5" fill="#ccc" stroke="#777" stroke-width="0.8"/><circle cx="7.8" cy="6.6" r="2.6" fill="#f1f1f1" stroke="#555" stroke-width="0.8"/><path d="M5.5 6.6h4.6M7.8 4v5.2" stroke="#555" stroke-width="0.5"/></svg>
<div class="a" style="left:784.5px;top:497.3px;width:3.5px;height:1px;background:#555;"></div>
<div class="a" style="left:790.3px;top:497.3px;width:67.7px;height:1px;background:#9a9a9a;"></div>
<div class="a" style="left:823.8px;top:492.5px;width:2.5px;height:10px;background:#555;"></div>
<svg style="left:859.2px;top:494.5px;" width="6" height="6" viewBox="0 0 6 6"><path d="M0 3h5.5M2.75 0.2v5.6" stroke="#444" stroke-width="1.1"/></svg>
<div class="a" style="left:0px;top:0px;width:1.5px;height:506px;background:#2a2a2a;"></div>
<svg style="left:0;top:0" width="900" height="506"><text x="415.5" y="13.9" style="font-family:'Liberation Sans',sans-serif;font-size:8.1px;fill:#fff;stroke:#fff;stroke-width:0.12px;">Document1 - Word</text><text x="868.3" y="32.3" style="font-family:'Liberation Sans',sans-serif;font-size:7.9px;fill:#fff;stroke:#fff;stroke-width:0.12px;">Share</text><text x="13.3" y="32.4" style="font-family:'Liberation Sans',sans-serif;font-size:7.8px;fill:#fff;stroke:#fff;stroke-width:0.05px;">File</text><text x="50" y="32.4" style="font-family:'Liberation Sans',sans-serif;font-size:7.8px;fill:#2c4d84;stroke:#2c4d84;stroke-width:0.05px;">Home</text><text x="90.7" y="32.4" style="font-family:'Liberation Sans',sans-serif;font-size:7.8px;fill:#fff;stroke:#fff;stroke-width:0.05px;">Insert</text><text x="129" y="32.4" style="font-family:'Liberation Sans',sans-serif;font-size:7.8px;fill:#fff;stroke:#fff;stroke-width:0.05px;">Design</text><text x="171.5" y="32.4" style="font-family:'Liberation Sans',sans-serif;font-size:7.8px;fill:#fff;stroke:#fff;stroke-width:0.05px;">Layout</text><text x="215" y="32.4" style="font-family:'Liberation Sans',sans-serif;font-size:7.8px;fill:#fff;stroke:#fff;stroke-width:0.05px;">References</text><text x="271.5" y="32.4" style="font-family:'Liberation Sans',sans-serif;font-size:7.8px;fill:#fff;stroke:#fff;stroke-width:0.05px;">Mailings</text><text x="320" y="32.4" style="font-family:'Liberation Sans',sans-serif;font-size:7.8px;fill:#fff;stroke:#fff;stroke-width:0.05px;">Review</text><text x="363.3" y="32.4" style="font-family:'Liberation Sans',sans-serif;font-size:7.8px;fill:#fff;stroke:#fff;stroke-width:0.05px;">View</text><text x="411" y="32.4" style="font-family:'Liberation Sans',sans-serif;font-size:7.8px;fill:#b9c8e2;stroke:#b9c8e2;stroke-width:0.12px;">Tell me what you want to do...</text><text x="29.9" y="95.5" style="font-family:'Liberation Sans',sans-serif;font-size:7.7px;fill:#555;stroke:#555;stroke-width:0.12px;">Clipboard</text><text x="177.8" y="95.5" style="font-family:'Liberation Sans',sans-serif;font-size:7.7px;fill:#555;stroke:#555;stroke-width:0.12px;">Font</text><text x="328.5" y="95.5" style="font-family:'Liberation Sans',sans-serif;font-size:7.7px;fill:#555;stroke:#555;stroke-width:0.12px;">Paragraph</text><text x="610.3" y="95.5" style="font-family:'Liberation Sans',sans-serif;font-size:7.7px;fill:#555;stroke:#555;stroke-width:0.12px;">Styles</text><text x="838.7" y="95.5" style="font-family:'Liberation Sans',sans-serif;font-size:7.7px;fill:#555;stroke:#555;stroke-width:0.12px;">Editing</text><text x="8" y="72.3" style="font-family:'Liberation Sans',sans-serif;font-size:7.4px;fill:#444;stroke:#444;stroke-width:0.12px;">Paste</text><text x="44.8" y="50" style="font-family:'Liberation Sans',sans-serif;font-size:7.7px;fill:#a9a9a9;stroke:#a9a9a9;stroke-width:0.12px;">Cut</text><text x="44.8" y="65" style="font-family:'Liberation Sans',sans-serif;font-size:7.7px;fill:#a9a9a9;stroke:#a9a9a9;stroke-width:0.12px;">Copy</text><text x="44.8" y="80" style="font-family:'Liberation Sans',sans-serif;font-size:7.7px;fill:#444;stroke:#444;stroke-width:0.12px;">Format Painter</text><text x="109.5" y="55.4" style="font-family:'Liberation Sans',sans-serif;font-size:7.6px;fill:#444;stroke:#444;stroke-width:0.12px;">Times New Ro</text><text x="170" y="55.4" style="font-family:'Liberation Sans',sans-serif;font-size:7.6px;fill:#444;stroke:#444;stroke-width:0.12px;">48</text><text x="201.2" y="55.7" style="font-family:'Liberation Sans',sans-serif;font-size:9.8px;fill:#444;stroke:#444;stroke-width:0.12px;">A</text><text x="216.2" y="55.7" style="font-family:'Liberation Sans',sans-serif;font-size:8px;fill:#444;stroke:#444;stroke-width:0.12px;">A</text><text x="234.2" y="54.7" style="font-family:'Liberation Sans',sans-serif;font-size:8.6px;fill:#444;stroke:#444;stroke-width:0.12px;">Aa</text><text x="111.2" y="74.6" style="font-family:'Liberation Sans',sans-serif;font-size:7.6px;fill:#505050;font-weight:bold">B</text><text x="126" y="75" style="font-family:'Liberation Sans',sans-serif;font-size:8.6px;fill:#444;stroke:#444;stroke-width:0.12px;font-style:italic;font-family:'Liberation Serif',serif;font-weight:bold">I</text><text x="140" y="75" style="font-family:'Liberation Sans',sans-serif;font-size:8px;fill:#444;stroke:#444;stroke-width:0.12px;">U</text><text x="159.8" y="75" style="font-family:'Liberation Sans',sans-serif;font-size:7.8px;fill:#444;stroke:#444;stroke-width:0.12px;letter-spacing:-0.4px">abc</text><text x="176" y="75" style="font-family:'Liberation Sans',sans-serif;font-size:8.8px;fill:#444;stroke:#444;stroke-width:0.12px;font-weight:bold">x</text><text x="182" y="76.5" style="font-family:'Liberation Sans',sans-serif;font-size:3.8px;fill:#444;">2</text><text x="190.3" y="75" style="font-family:'Liberation Sans',sans-serif;font-size:8.8px;fill:#444;stroke:#444;stroke-width:0.12px;font-weight:bold">x</text><text x="196.2" y="70.5" style="font-family:'Liberation Sans',sans-serif;font-size:3.8px;fill:#444;">2</text><text x="411.8" y="54" style="font-family:'Liberation Sans',sans-serif;font-size:9.6px;fill:#444;stroke:#444;stroke-width:0.12px;font-weight:bold">¶</text><text x="433.7" y="59.4" style="font-family:'Liberation Serif',serif;font-size:10.6px;fill:#222;stroke:#222;stroke-width:0.12px;">AaBbCcI</text><text x="436.8" y="75" style="font-family:'Liberation Sans',sans-serif;font-size:7.7px;fill:#555;stroke:#555;stroke-width:0.12px;">¶ Normal</text><text x="481" y="59.4" style="font-family:'Liberation Serif',serif;font-size:10.6px;fill:#222;stroke:#222;stroke-width:0.12px;">AaBbCcI</text><text x="479.8" y="75" style="font-family:'Liberation Sans',sans-serif;font-size:7.7px;fill:#555;stroke:#555;stroke-width:0.12px;">¶ No Spac...</text><text x="530.6" y="75" style="font-family:'Liberation Sans',sans-serif;font-size:7.7px;fill:#555;stroke:#555;stroke-width:0.12px;">Heading 1</text><text x="577.9" y="75" style="font-family:'Liberation Sans',sans-serif;font-size:7.7px;fill:#555;stroke:#555;stroke-width:0.12px;">Heading 2</text><text x="624.3" y="60" style="font-family:'Liberation Sans',sans-serif;font-size:17.6px;fill:#4a4a4a;letter-spacing:2px">AaB</text><text x="636.2" y="75" style="font-family:'Liberation Sans',sans-serif;font-size:7.7px;fill:#555;stroke:#555;stroke-width:0.12px;">Title</text><text x="671" y="59.4" style="font-family:'Liberation Sans',sans-serif;font-size:8.3px;fill:#777;stroke:#777;stroke-width:0.12px;letter-spacing:0.6px">AaBbCcD</text><text x="677.3" y="75" style="font-family:'Liberation Sans',sans-serif;font-size:7.7px;fill:#555;stroke:#555;stroke-width:0.12px;">Subtitle</text><text x="719" y="59" style="font-family:'Liberation Serif',serif;font-size:10.6px;fill:#666;stroke:#666;stroke-width:0.12px;font-style:italic">AaBbCcI</text><text x="717.7" y="75" style="font-family:'Liberation Sans',sans-serif;font-size:7.7px;fill:#555;stroke:#555;stroke-width:0.12px;">Subtle Em...</text><text x="766.3" y="59" style="font-family:'Liberation Serif',serif;font-size:10.6px;fill:#222;stroke:#222;stroke-width:0.12px;font-style:italic">AaBbCcI</text><text x="769" y="75" style="font-family:'Liberation Sans',sans-serif;font-size:7.7px;fill:#555;stroke:#555;stroke-width:0.12px;">Emphasis</text><text x="841.8" y="49.5" style="font-family:'Liberation Sans',sans-serif;font-size:7.7px;fill:#444;stroke:#444;stroke-width:0.12px;">Find</text><text x="841.8" y="65" style="font-family:'Liberation Sans',sans-serif;font-size:7.7px;fill:#444;stroke:#444;stroke-width:0.12px;">Replace</text><text x="841.8" y="80.5" style="font-family:'Liberation Sans',sans-serif;font-size:7.7px;fill:#444;stroke:#444;stroke-width:0.12px;">Select</text><text x="4.6" y="501" style="font-family:'Liberation Sans',sans-serif;font-size:7.4px;fill:#444;stroke:#444;stroke-width:0.12px;">Page 1 of 1</text><text x="55" y="501" style="font-family:'Liberation Sans',sans-serif;font-size:7.4px;fill:#444;stroke:#444;stroke-width:0.12px;">13 words</text><text x="98" y="501" style="font-family:'Liberation Sans',sans-serif;font-size:7.4px;fill:#444;stroke:#444;stroke-width:0.12px;">Vietnamese</text><text x="874.3" y="501" style="font-family:'Liberation Sans',sans-serif;font-size:7.4px;fill:#444;stroke:#444;stroke-width:0.12px;">110 %</text></svg>
</body></html>
